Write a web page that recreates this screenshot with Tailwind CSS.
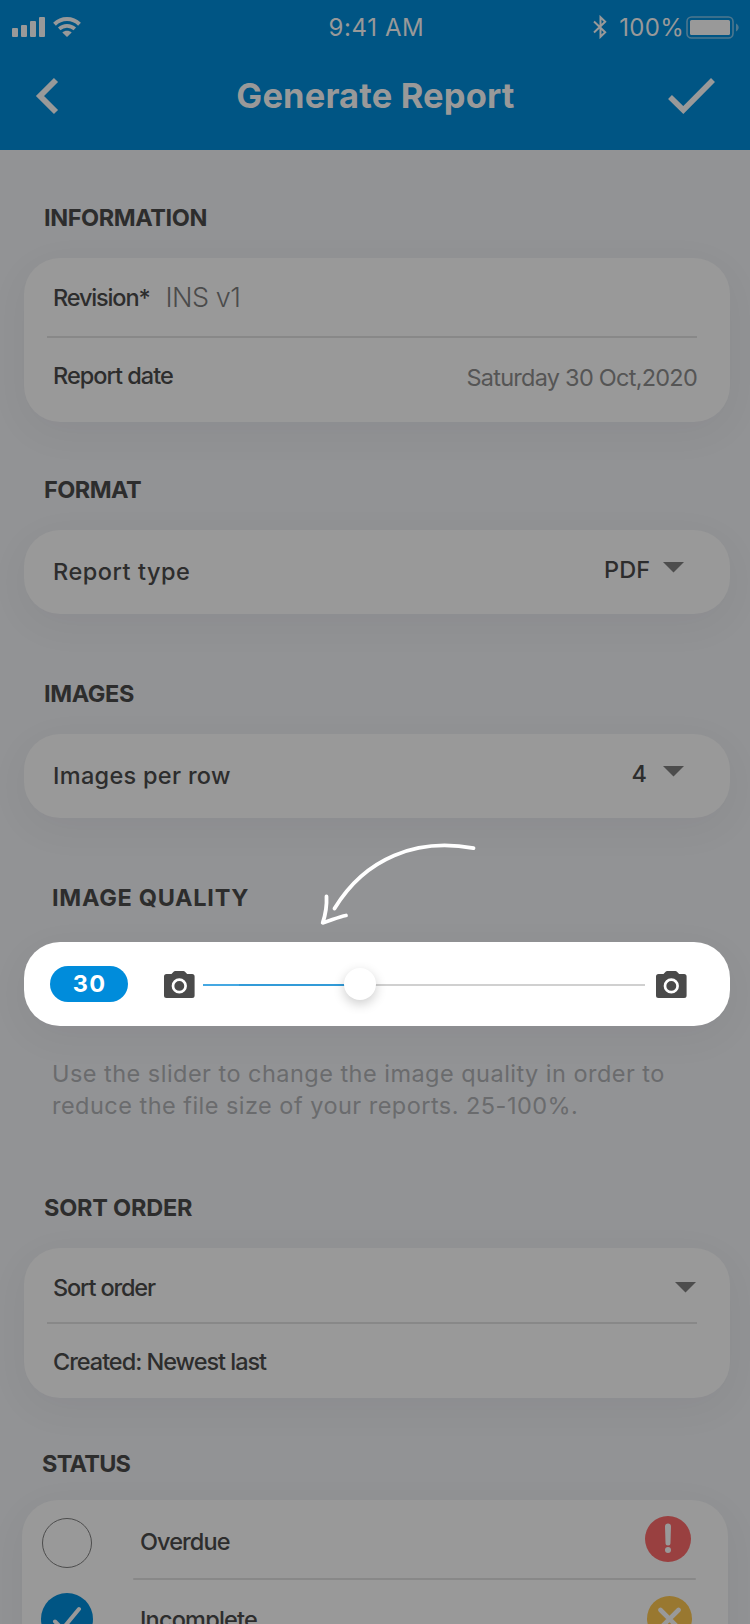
<!DOCTYPE html>
<html lang="en">
<head>
<meta charset="utf-8">
<title>Generate Report</title>
<script src="https://cdn.jsdelivr.net/npm/@tailwindcss/browser@4"></script>
</head>
<body class="bg-[#929395]">
<div class="relative w-[750px] h-[1624px] overflow-hidden bg-[#929395] font-['Inter',sans-serif] text-[23.5px] leading-[31px] text-[#2d2d2d] whitespace-nowrap">

  <header class="h-[150px] bg-[#005584] text-[#999999]">
    <!-- Status bar -->
    <div class="grid grid-cols-3 pt-3 h-[75px] text-[24px]">
      <div class="flex items-start pl-3 pt-[5px] gap-2">
        <svg class="w-[33px] h-5" viewBox="0 0 33 20" fill="currentColor"><rect y="11" width="6" height="9" rx="1"/><rect x="9" y="8" width="6" height="12" rx="1"/><rect x="18" y="4" width="6" height="16" rx="1"/><rect x="27" width="6" height="20" rx="1"/></svg>
        <svg class="w-7 h-5" viewBox="0 0 28 20" fill="none" stroke="currentColor" stroke-width="4"><path d="M1.5 7.2C8.5 .4 19.500 .4 26.500 7.200"/><path d="M6.200 11.900C10.600 7.800 17.400 7.800 21.800 11.900" stroke-width="3.600"/><path d="M9.300 15.600C11.800 13 16.200 13 18.700 15.600L14 20Z" fill="currentColor" stroke="none"/></svg>
      </div>
      <div class="pl-[3px] text-center tracking-[0.6px]">9:41 AM</div>
      <div class="flex items-start justify-end pr-[11px]">
        <svg class="mt-[3px] w-[14px] h-6 mr-[12px]" viewBox="0 0 14 24" fill="none" stroke="currentColor" stroke-width="2"><path d="M1 6.500L12.200 17.200L7.500 21.800V2.200L12.200 6.800L1 17.500"/></svg>
        <span class="tracking-[0.3px] mr-[2px]">100%</span>
        <svg class="mt-1 w-[53px] h-[23px]" viewBox="0 0 53 23" fill="currentColor"><rect x="1" y="1" width="46" height="21" rx="4.500" fill="none" stroke="currentColor" stroke-opacity=".5" stroke-width="1.600"/><rect x="4" y="4" width="40" height="15" rx="1.500"/><path d="M50 7.500C53.500 9 53.500 14 50 15.500Z" fill-opacity=".5"/></svg>
      </div>
    </div>
    <!-- Title bar -->
    <div class="flex justify-between px-[34px]">
      <svg class="mt-[1px] w-[26px] h-10" viewBox="0 0 26 40" fill="none" stroke="currentColor" stroke-width="5.800"><path d="M22 4L6 20L22 36"/></svg>
      <h1 class="ml-[23px] text-[34.5px] leading-[41px] font-bold tracking-[0.14px]">Generate Report</h1>
      <svg class="mt-[1px] w-12 h-10" viewBox="0 0 48 40" fill="none" stroke="currentColor" stroke-width="5.600"><path d="M2 21L15.300 34L45 4"/></svg>
    </div>
  </header>

  <main class="pl-6 pr-5">
    <h2 class="pt-[52px] pl-5 font-bold tracking-[-0.41px]">INFORMATION</h2>
    <section class="mt-[25px] h-[164px] rounded-[36px] bg-[#999999] shadow-[0_10px_40px_rgba(20,20,40,0.05)]">
      <div class="flex h-[78px] pl-[29px]">
        <span class="pt-6 font-medium tracking-[-1.15px]">Revision*</span>
        <span class="pt-[23px] ml-[16px] text-[27px] leading-[33px] font-[350] tracking-[-0.5px] text-[#4b4b4b]">INS v1</span>
      </div>
      <div class="ml-[23px] mr-[33px] h-0.5 bg-[#888888]"></div>
      <div class="flex justify-between pl-[29px] pr-[33px]">
        <span class="pt-[22px] font-medium tracking-[-0.98px]">Report date</span>
        <span class="pt-6 tracking-[-0.75px] text-[#555555]">Saturday 30 Oct,2020</span>
      </div>
    </section>

    <h2 class="pt-[52px] pl-5 font-bold tracking-[-0.55px]">FORMAT</h2>
    <section class="mt-[25px] h-[84px] rounded-[36px] bg-[#999999] shadow-[0_10px_40px_rgba(20,20,40,0.05)] flex pl-[29px] pr-[46px]">
      <span class="pt-[26px] font-medium tracking-[0.53px]">Report type</span>
      <span class="pt-6 ml-auto mr-[13px] font-medium">PDF</span>
      <svg class="mt-8 w-[21px] h-[10.500px]" viewBox="0 0 21 10.500" fill="#4d4d4d"><path d="M0 0H21L10.500 10.500Z"/></svg>
    </section>

    <h2 class="pt-[64px] pl-5 font-bold tracking-[-0.4px]">IMAGES</h2>
    <section class="mt-[25px] h-[84px] rounded-[36px] bg-[#999999] shadow-[0_10px_40px_rgba(20,20,40,0.05)] flex pl-[29px] pr-[46px]">
      <span class="pt-[26px] font-medium tracking-[0.3px]">Images per row</span>
      <span class="pt-6 ml-auto mr-[16px] font-medium">4</span>
      <svg class="mt-8 w-[21px] h-[10.500px]" viewBox="0 0 21 10.500" fill="#4d4d4d"><path d="M0 0H21L10.500 10.500Z"/></svg>
    </section>

    <h2 class="pt-[64px] pl-[28px] font-bold tracking-[0.7px]">IMAGE QUALITY</h2>
    <section class="mt-[29px] h-[84px] rounded-[36px] bg-white shadow-[0_10px_40px_rgba(20,20,40,0.05)] flex items-start pl-[26px] pr-[43px]">
      <div class="mt-6 w-[78px] h-9 rounded-full bg-[#008cdb] pt-[2px] pl-px text-center font-bold tracking-[1.3px] text-white">30</div>
      <svg class="mt-[29px] ml-9 w-[31px] h-[27px]" viewBox="0 0 31 27"><path fill="#4a4a4a" d="M2.500 3H7.500L9.600 .7Q10.200 0 11.200 0H19.400Q20.400 0 21 .7L23.100 3H28.100Q30.600 3 30.600 5.500V24.500Q30.600 27 28.100 27H2.500Q0 27 0 24.500V5.500Q0 3 2.500 3Z"/><circle cx="15.300" cy="14.900" r="6.300" fill="none" stroke="#fff" stroke-width="2.700"/></svg>
      <div class="relative mt-[42px] ml-2 w-[442px] h-0.5 bg-[#d0d0d0]">
        <div class="flex h-0.5 w-[157px] bg-[#329bd8]"><div class="w-9 bg-[#45a8e2]"></div></div>
        <div class="absolute left-[141px] -top-4 size-8 rounded-full bg-white shadow-[0_4px_12px_rgba(0,0,0,0.2)]"></div>
      </div>
      <svg class="mt-[29px] ml-auto w-[31px] h-[27px]" viewBox="0 0 31 27"><path fill="#4a4a4a" d="M2.500 3H7.500L9.600 .7Q10.200 0 11.200 0H19.400Q20.400 0 21 .7L23.100 3H28.100Q30.600 3 30.600 5.500V24.500Q30.600 27 28.100 27H2.500Q0 27 0 24.500V5.500Q0 3 2.500 3Z"/><circle cx="15.300" cy="14.900" r="6.300" fill="none" stroke="#fff" stroke-width="2.700"/></svg>
    </section>
    <p class="mt-[32px] h-[64px] pl-[28px] leading-[32px] tracking-[0.47px] text-[#6a6b6d]">Use the slider to change the image quality in order to<br>reduce the file size of your reports. 25-100%.</p>

    <h2 class="pt-[70px] pl-5 font-bold tracking-[-0.22px]">SORT ORDER</h2>
    <section class="mt-[25px] h-[150px] rounded-[36px] bg-[#999999] shadow-[0_10px_40px_rgba(20,20,40,0.05)]">
      <div class="flex justify-between h-[74px] pl-[29px] pr-[34px]">
        <span class="pt-6 font-medium tracking-[-1.15px]">Sort order</span>
        <svg class="mt-[34px] w-[21px] h-[10.500px]" viewBox="0 0 21 10.500" fill="#4d4d4d"><path d="M0 0H21L10.500 10.500Z"/></svg>
      </div>
      <div class="ml-[23px] mr-[33px] h-0.5 bg-[#888888]"></div>
      <div class="pt-[22px] pl-[29px] font-medium tracking-[-1.03px]">Created: Newest last</div>
    </section>

    <h2 class="pt-[50px] pl-[18px] font-bold tracking-[-0.75px]">STATUS</h2>
    <section class="mt-[21px] -ml-0.5 w-[706px] h-[240px] rounded-[36px] bg-[#999999] shadow-[0_10px_40px_rgba(20,20,40,0.05)]">
      <div class="flex items-start h-[78px] pl-5 pr-[37px]">
        <div class="mt-[18px] size-[50px] rounded-full border border-[#4d4d4d]"></div>
        <span class="pt-[26px] ml-[48px] font-medium tracking-[-0.92px]">Overdue</span>
        <svg class="mt-4 ml-auto size-[46px]" viewBox="0 0 46 46"><circle cx="23" cy="23" r="23" fill="#994040"/><path d="M20 10.500A3 3 0 0 1 26 10.500L25.500 27A2.500 2.500 0 0 1 20.500 27Z" fill="#999999"/><circle cx="23" cy="34" r="3" fill="#999999"/></svg>
      </div>
      <div class="ml-[111px] mr-[32px] h-0.5 rounded-full bg-[#888888]"></div>
      <div class="flex items-start pl-[19px] pr-[36px]">
        <svg class="mt-[13px] size-[52px]" viewBox="0 0 52 52"><circle cx="26" cy="26" r="26" fill="#005584"/><path d="M14 28.500L21.500 36L38 16" fill="none" stroke="#999999" stroke-width="4" stroke-linecap="round" stroke-linejoin="round"/></svg>
        <span class="pt-6 ml-[47px] font-medium tracking-[-0.8px]">Incomplete</span>
        <svg class="mt-4 ml-auto size-[45px]" viewBox="0 0 45 45"><circle cx="22.500" cy="22.500" r="22.500" fill="#997830"/><path d="M13.500 14L31.500 32M31.500 14L13.500 32" stroke="#999999" stroke-width="4.600" stroke-linecap="round"/></svg>
      </div>
    </section>
  </main>

  <!-- Hand-drawn hint arrow pointing at the slider -->
  <svg class="absolute left-[310px] top-[836px] w-[180px] h-[100px]" viewBox="310 836 180 100" fill="none" stroke="#fff" stroke-width="3.800" stroke-linejoin="round" stroke-linecap="round"><path d="M473.500 848.200C417 837.500 365 858 334.500 908.500"/><path d="M326.500 896.500C327 906 325 916 322.700 922.800C331 920.500 338 917 346 915.500"/></svg>
</div>
</body>
</html>
